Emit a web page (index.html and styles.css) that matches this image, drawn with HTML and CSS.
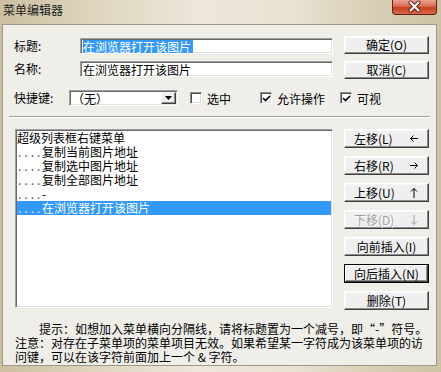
FILE: index.html
```html
<!DOCTYPE html>
<html lang="zh-CN">
<head>
<meta charset="utf-8">
<title>菜单编辑器</title>
<link rel="stylesheet" href="styles.css">
</head>
<body>
<div class="window">
  <div class="titlebar">
    <span class="title">菜单编辑器</span>
    <div class="close">
      <svg width="45" height="15" viewBox="0 0 45 15">
        <path d="M18.5 3.5 L26.5 11.5 M26.5 3.5 L18.5 11.5" stroke="#6b1a0e" stroke-width="4" stroke-linecap="round"/>
        <path d="M18.5 3.5 L26.5 11.5 M26.5 3.5 L18.5 11.5" stroke="#ffffff" stroke-width="2.2" stroke-linecap="round"/>
      </svg>
    </div>
  </div>
  <div class="client">
    <div class="upper">
      <div class="fields">
        <div class="row">
          <span class="label">标题:</span>
          <div class="edit"><span class="sel">在浏览器打开该图片</span></div>
        </div>
        <div class="row">
          <span class="label">名称:</span>
          <div class="edit">在浏览器打开该图片</div>
        </div>
      </div>
      <div class="topbtns">
        <div class="btn">确定(O)</div>
        <div class="btn">取消(C)</div>
      </div>
    </div>
    <div class="row3">
      <span class="label short">快捷键:</span>
      <div class="combo">
        <span class="ctext">（无）</span>
        <span class="cbtn"><svg width="7" height="4" viewBox="0 0 7 4"><path d="M0 0H7L3.5 4Z" fill="#000"/></svg></span>
      </div>
      <div class="chk c1"><span class="box"></span><span>选中</span></div>
      <div class="chk c2"><span class="box"><svg width="9" height="9" viewBox="0 0 9 9"><path d="M1 4 L3.5 6.5 L8 2" stroke="#000" stroke-width="1.6" fill="none"/></svg></span><span>允许操作</span></div>
      <div class="chk c3"><span class="box"><svg width="9" height="9" viewBox="0 0 9 9"><path d="M1 4 L3.5 6.5 L8 2" stroke="#000" stroke-width="1.6" fill="none"/></svg></span><span>可视</span></div>
    </div>
    <div class="sep"></div>
    <div class="middle">
      <div class="list">
        <div class="item">超级列表框右键菜单</div>
        <div class="item"><span class="ind">....</span>复制当前图片地址</div>
        <div class="item"><span class="ind">....</span>复制选中图片地址</div>
        <div class="item"><span class="ind">....</span>复制全部图片地址</div>
        <div class="item"><span class="ind">....</span>-</div>
        <div class="item selected"><span class="ind">....</span>在浏览器打开该图片</div>
      </div>
      <div class="sidebtns">
        <div class="btn arrow"><span>左移(L)</span><svg width="8" height="7" viewBox="0 0 8 7"><path d="M0.5 3.5H8 M3.5 0.5 L0.5 3.5 L3.5 6.5" stroke="#000" fill="none"/></svg></div>
        <div class="btn arrow"><span>右移(R)</span><svg width="8" height="7" viewBox="0 0 8 7"><path d="M0 3.5H7.5 M4.5 0.5 L7.5 3.5 L4.5 6.5" stroke="#000" fill="none"/></svg></div>
        <div class="btn arrow"><span>上移(U)</span><svg width="8" height="10" viewBox="0 0 8 10"><path d="M4 0.5V10 M1 3.5 L4 0.5 L7 3.5" stroke="#000" fill="none"/></svg></div>
        <div class="btn arrow disabled"><span>下移(D)</span><svg width="8" height="10" viewBox="0 0 8 10"><path d="M4 0V9.5 M1 6.5 L4 9.5 L7 6.5" stroke="#a0a0a0" fill="none"/></svg></div>
        <div class="btn">向前插入(I)</div>
        <div class="btn default">向后插入(N)</div>
        <div class="btn">删除(T)</div>
      </div>
    </div>
    <div class="hint">
      <div class="l1">提示：如想加入菜单横向分隔线，请将标题置为一个减号，即“-”符号。</div>
      <div>注意：对存在子菜单项的菜单项目无效。如果希望某一字符成为该菜单项的访</div>
      <div>问键，可以在该字符前面加上一个 &amp; 字符。</div>
    </div>
  </div>
</div>
</body>
</html>
```

FILE: styles.css
```css
* { box-sizing: border-box; }

body {
  margin: 0;
  width: 441px;
  height: 372px;
  overflow: hidden;
  font-family: "Noto Sans CJK SC", "DejaVu Sans", sans-serif;
  font-size: 12px;
  color: #000;
}

.window {
  width: 441px;
  height: 372px;
  display: flex;
  flex-direction: column;
  background: linear-gradient(to right, #cbbf9f 0%, #ddd4bd 20%, #ece7da 45%, #e9e3d3 65%, #d8ceb5 85%, #cdc2a4 100%);
}

.titlebar {
  height: 24px;
  position: relative;
  padding: 4px 0 0 3px;
  flex: none;
}

.title {
  display: block;
  line-height: 12px;
  font-size: 12px;
  color: #1c1c1c;
}

.close {
  position: absolute;
  right: 4px;
  top: 0;
  width: 45px;
  height: 15px;
  border: 1px solid #5e2318;
  border-top: none;
  border-radius: 0 0 4px 4px;
  background: linear-gradient(#eba591 0%, #d86a50 45%, #c4401f 55%, #d96a4c 100%);
  overflow: hidden;
}

.close svg { display: block; margin: -1px 0 0 -1px; }

.client {
  flex: 1;
  margin: 0 4px 6px 2px;
  background: #efeee9;
  border: 1px solid #9e978a;
}

.upper {
  display: flex;
  padding: 11px 0 0 11px;
}

.fields {
  width: 319px;
  padding-top: 2px;
}

.row {
  display: flex;
  align-items: center;
  height: 16px;
}

.row + .row { margin-top: 7px; }

.label {
  width: 66px;
  line-height: 14px;
}

.label.short { width: 55px; }

.edit {
  width: 253px;
  height: 16px;
  background: #fff;
  border-top: 1px solid #a0a0a0;
  border-left: 1px solid #a0a0a0;
  border-bottom: 1px solid #fff;
  border-right: 1px solid #fff;
  box-shadow: inset 1px 1px 0 #696969, inset -1px -1px 0 #e3e3e3;
  padding: 1px 0 0 2px;
  line-height: 13px;
  white-space: nowrap;
}

.sel {
  display: inline-block;
  background: #3399ff;
  color: #fff;
  line-height: 13px;
  padding-right: 2px;
}

.topbtns {
  margin-left: 11px;
  display: flex;
  flex-direction: column;
  gap: 7px;
}

.btn {
  width: 85px;
  height: 18px;
  display: flex;
  align-items: center;
  justify-content: center;
  background: #efefef;
  border: 1px solid;
  border-color: #fff #404040 #404040 #fff;
  box-shadow: inset -1px -1px 0 #8a8a8a, inset 1px 1px 0 #f8f8f8;
  line-height: 14px;
  white-space: nowrap;
}

.row3 {
  display: flex;
  align-items: center;
  height: 16px;
  margin: 11px 0 0 11px;
  white-space: nowrap;
}

.combo {
  width: 109px;
  height: 16px;
  display: flex;
  align-items: center;
  justify-content: space-between;
  background: #fff;
  border-top: 1px solid #a0a0a0;
  border-left: 1px solid #a0a0a0;
  border-bottom: 1px solid #fff;
  border-right: 1px solid #fff;
  box-shadow: inset 1px 1px 0 #696969, inset -1px -1px 0 #e3e3e3;
  padding: 1px 1px 1px 2px;
}

.ctext { line-height: 13px; }

.cbtn {
  width: 15px;
  height: 12px;
  display: flex;
  align-items: center;
  justify-content: center;
  background: #efefef;
  border: 1px solid;
  border-color: #f4f4f4 #404040 #404040 #f4f4f4;
  box-shadow: inset -1px -1px 0 #8a8a8a;
}

.chk {
  display: flex;
  align-items: center;
  gap: 5px;
}

.c1 { margin-left: 12px; }
.c2 { margin-left: 29px; }
.c3 { margin-left: 15px; }

.box {
  width: 12px;
  height: 12px;
  display: flex;
  align-items: center;
  justify-content: center;
  background: #fff;
  border-top: 1px solid #8a8a8a;
  border-left: 1px solid #8a8a8a;
  border-bottom: 1px solid #fff;
  border-right: 1px solid #fff;
  box-shadow: inset 1px 1px 0 #505050, inset -1px -1px 0 #dcdcdc;
}

.sep {
  margin: 10px 6px 0 6px;
  border-top: 1px solid #a0a0a0;
  border-bottom: 1px solid #fff;
}

.middle {
  display: flex;
  margin-top: 11px;
  padding-left: 12px;
}

.list {
  width: 318px;
  height: 179px;
  background: #fff;
  border-top: 1px solid #a0a0a0;
  border-left: 1px solid #a0a0a0;
  border-bottom: 1px solid #fff;
  border-right: 1px solid #fff;
  box-shadow: inset 1px 1px 0 #696969, inset -1px -1px 0 #e3e3e3;
  padding: 1px 1px 0 1px;
}

.item {
  height: 14px;
  line-height: 14px;
  white-space: nowrap;
}

.item.selected {
  background: #3399ff;
  color: #fff;
}

.ind {
  display: inline-block;
  width: 25px;
  padding-left: 1px;
  letter-spacing: 3px;
  color: #555;
}

.selected .ind { color: #cfe6ff; }

.sidebtns {
  margin-left: 11px;
  display: flex;
  flex-direction: column;
  gap: 8px;
}

.sidebtns .btn { height: 19px; }

.btn.arrow {
  justify-content: space-between;
  padding: 0 10px 0 9px;
}

.btn.disabled {
  color: #a0a0a0;
  text-shadow: 1px 1px 0 #fff;
}

.btn.default {
  border-color: #000;
  box-shadow: inset -1px -1px 0 #404040, inset 1px 1px 0 #fff, inset -2px -2px 0 #8a8a8a;
}

.hint {
  margin: 12px 0 0 12px;
  line-height: 14px;
  white-space: nowrap;
}

.hint .l1 { text-indent: 24px; }
```
